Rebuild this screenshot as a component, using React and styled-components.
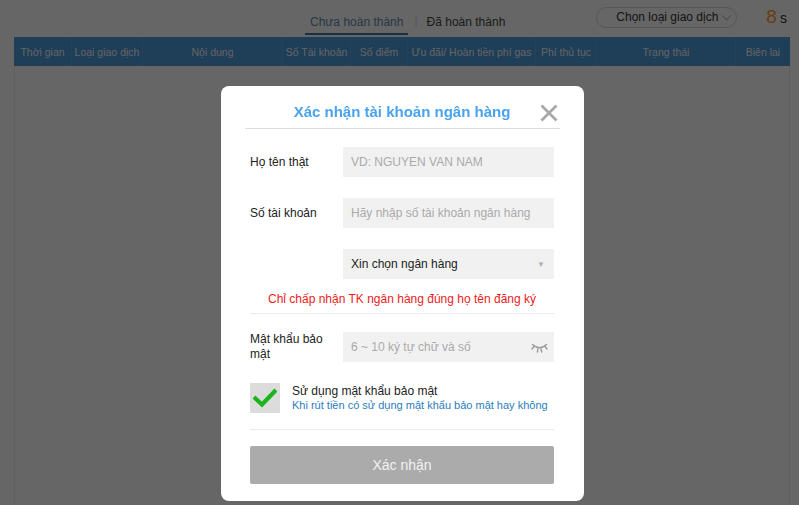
import React from "react";
import styled, { createGlobalStyle } from "styled-components";

const GlobalStyle = createGlobalStyle`
  html, body {
    margin: 0;
    padding: 0;
    background: #ffffff;
    font-family: "Liberation Sans", Arial, sans-serif;
  }
  * { box-sizing: border-box; }
`;

const columns = [
  { label: "Thời gian", width: 58 },
  { label: "Loại giao dịch", width: 71 },
  { label: "Nội dung", width: 140 },
  { label: "Số Tài khoản", width: 68 },
  { label: "Số điểm", width: 57 },
  { label: "Ưu đãi/ Hoàn tiền phí gas", width: 128 },
  { label: "Phí thủ tục", width: 61 },
  { label: "Trạng thái", width: 139 },
  { label: "Biên lai", width: 54 },
];

function EyeClosed() {
  return (
    <svg width="17" height="11" viewBox="0 0 17 11" fill="none" stroke="#9a9a9a" strokeWidth="1.4" strokeLinecap="round">
      <path d="M1.5 2.5 Q8.5 9 15.5 2.5" />
      <path d="M3 4.5 L1 7" />
      <path d="M14 4.5 L16 7" />
      <path d="M7 7 L6.3 10" />
      <path d="M10 7 L10.7 10" />
    </svg>
  );
}

function CheckMark() {
  return (
    <svg width="24" height="20" viewBox="0 0 24 20" fill="none">
      <path d="M2.5 10.5 L9 16.5 L21.5 3.5" stroke="#1db51d" strokeWidth="4.2" strokeLinecap="square" />
    </svg>
  );
}

function CloseIcon() {
  return (
    <svg width="18" height="18" viewBox="0 0 18 18" stroke="#a8a8a8" strokeWidth="2.8">
      <path d="M1.5 1.5 L16.5 16.5 M16.5 1.5 L1.5 16.5" />
    </svg>
  );
}

function App() {
  return (
    <>
      <GlobalStyle />
      <Page>
        <TopBar>
          <Tabs>
            <Tab $active>Chưa hoàn thành</Tab>
            <TabDivider>|</TabDivider>
            <Tab>Đã hoàn thành</Tab>
          </Tabs>
          <FilterSelect>
            Chọn loại giao dịch
            <Chevron viewBox="0 0 10 6" fill="none" stroke="#c4c4c4" strokeWidth="1">
              <path d="M1 1 L5 5 L9 1" />
            </Chevron>
          </FilterSelect>
          <Timer>
            <TimerNumber>8</TimerNumber>
            <TimerUnit>s</TimerUnit>
          </Timer>
        </TopBar>
        <Table>
          <HeaderRow>
            {columns.map((c) => (
              <HeaderCell key={c.label} $w={c.width}>
                {c.label}
              </HeaderCell>
            ))}
          </HeaderRow>
          <TableBody />
        </Table>
      </Page>

      <Overlay>
        <Modal>
          <ModalHeader>
            <ModalTitle>Xác nhận tài khoản ngân hàng</ModalTitle>
            <CloseButton>
              <CloseIcon />
            </CloseButton>
          </ModalHeader>
          <Form>
            <FieldRow>
              <Label>Họ tên thật</Label>
              <Input placeholder="VD: NGUYEN VAN NAM" />
            </FieldRow>
            <FieldRow>
              <Label>Số tài khoản</Label>
              <Input placeholder="Hãy nhập số tài khoản ngân hàng" />
            </FieldRow>
            <FieldRow>
              <Label />
              <SelectBox>
                Xin chọn ngân hàng
                <SelectArrow>▼</SelectArrow>
              </SelectBox>
            </FieldRow>
            <Warning>Chỉ chấp nhận TK ngân hàng đúng họ tên đăng ký</Warning>
            <Divider $before={0} $after={-3} />
            <FieldRow>
              <Label>Mật khẩu bảo mật</Label>
              <InputWrap>
                <Input placeholder="6 ~ 10 ký tự chữ và số" />
                <EyeButton>
                  <EyeClosed />
                </EyeButton>
              </InputWrap>
            </FieldRow>
            <CheckRow>
              <CheckBox>
                <CheckMark />
              </CheckBox>
              <CheckText>
                <CheckTitle>Sử dụng mật khẩu bảo mật</CheckTitle>
                <CheckHint>Khi rút tiền có sử dụng mật khẩu bảo mật hay không</CheckHint>
              </CheckText>
            </CheckRow>
            <Divider $before={-5} $after={-5} />
            <SubmitButton>Xác nhận</SubmitButton>
          </Form>
        </Modal>
      </Overlay>
    </>
  );
}

export default App;

const Page = styled.div`
  height: 505px;
  padding: 0 9px 0 14px;
  display: flex;
  flex-direction: column;
  white-space: nowrap;
`;

const TopBar = styled.div`
  height: 37px;
  display: flex;
  align-items: center;
  & > * {
    flex-shrink: 0;
  }
`;

const Tabs = styled.div`
  display: flex;
  align-items: center;
  margin-left: 291px;
  height: 100%;
`;

const Tab = styled.div`
  font-size: 12px;
  padding: 3px 5px 0;
  height: 30px;
  line-height: 28px;
  color: ${(p) => (p.$active ? "#5f8cb4" : "#444")};
  border-bottom: 2px solid ${(p) => (p.$active ? "#3f73a0" : "transparent")};
  margin-top: 3px;
`;

const TabDivider = styled.span`
  color: #d8d8d8;
  font-size: 12px;
  margin: 3px 4px 0 6px;
`;

const FilterSelect = styled.div`
  margin-left: 86px;
  margin-top: -3px;
  width: 141px;
  height: 21px;
  border: 1px solid #d6d6d6;
  border-radius: 11px;
  display: flex;
  align-items: center;
  padding-left: 19px;
  font-size: 12px;
  color: #333;
  gap: 3px;
`;

const Chevron = styled.svg`
  width: 11px;
  height: 7px;
`;

const Timer = styled.div`
  margin-left: 29px;
  margin-top: -4px;
  display: flex;
  align-items: baseline;
  gap: 3px;
`;

const TimerNumber = styled.span`
  font-size: 19px;
  color: #ff9a1e;
`;

const TimerUnit = styled.span`
  font-size: 14px;
  color: #333;
`;

const Table = styled.div`
  flex: 1;
  display: flex;
  flex-direction: column;
  width: 776px;
`;

const HeaderRow = styled.div`
  display: flex;
  height: 29px;
  background: #4e9bdc;
`;

const HeaderCell = styled.div`
  width: ${(p) => p.$w}px;
  flex-shrink: 0;
  display: flex;
  align-items: center;
  justify-content: center;
  font-size: 10.5px;
  color: #f4f8fc;
  overflow: hidden;
  border-right: 1px solid #5fa6e0;
  &:last-child {
    border-right: none;
  }
`;

const TableBody = styled.div`
  flex: 1;
  background: #fff;
  border-left: 1px solid #f0f0f0;
  border-right: 1px solid #e8e8e8;
`;

const Overlay = styled.div`
  position: fixed;
  inset: 0;
  background: rgba(0, 0, 0, 0.6);
  display: flex;
  justify-content: center;
  align-items: flex-start;
  padding: 86px 0 0 6px;
`;

const Modal = styled.div`
  width: 363px;
  background: #fff;
  border-radius: 8px;
  padding: 0 30px 17px 29px;
`;

const ModalHeader = styled.div`
  position: relative;
  height: 43px;
  margin: 0 -6px 0 -5px;
  border-bottom: 1px solid #dcdcdc;
  display: flex;
  align-items: center;
  justify-content: center;
`;

const ModalTitle = styled.div`
  font-size: 15px;
  font-weight: bold;
  color: #4aa3ec;
  margin-top: 8px;
  margin-left: -1px;
`;

const CloseButton = styled.div`
  position: absolute;
  right: 2px;
  top: 18px;
  width: 18px;
  height: 18px;
  display: flex;
`;

const Form = styled.div`
  display: flex;
  flex-direction: column;
  gap: 21px;
  padding-top: 18px;
`;

const FieldRow = styled.div`
  display: flex;
  align-items: center;
`;

const Label = styled.div`
  width: 93px;
  flex-shrink: 0;
  font-size: 12px;
  color: #222;
  line-height: 15px;
  padding-right: 14px;
`;

const InputWrap = styled.div`
  position: relative;
  flex: 1;
  display: flex;
`;

const Input = styled.input`
  flex: 1;
  width: 100%;
  height: 30px;
  border: none;
  outline: none;
  background: #f1f1f1;
  padding: 0 8px;
  font-size: 12px;
  font-family: "Liberation Sans", Arial, sans-serif;
  color: #333;
  &::placeholder {
    color: #aaaaaa;
  }
`;

const EyeButton = styled.div`
  position: absolute;
  right: 6px;
  top: 10px;
  display: flex;
`;

const SelectBox = styled.div`
  flex: 1;
  height: 30px;
  background: #f1f1f1;
  display: flex;
  align-items: center;
  justify-content: space-between;
  padding: 0 9px 0 8px;
  font-size: 12px;
  color: #222;
`;

const SelectArrow = styled.span`
  font-size: 8px;
  color: #b0b0b0;
`;

const Warning = styled.div`
  text-align: center;
  font-size: 12px;
  color: #ec1c1c;
  margin-top: -8px;
  margin-bottom: -14px;
`;

const Divider = styled.div`
  height: 1px;
  background: #ececec;
  margin-top: ${(p) => p.$before}px;
  margin-bottom: ${(p) => p.$after}px;
`;

const CheckRow = styled.div`
  display: flex;
  align-items: center;
  gap: 12px;
`;

const CheckBox = styled.div`
  width: 30px;
  height: 30px;
  background: #dcdcdc;
  display: flex;
  align-items: center;
  justify-content: center;
`;

const CheckText = styled.div`
  display: flex;
  flex-direction: column;
  gap: 1px;
  margin-top: -1px;
`;

const CheckTitle = styled.div`
  font-size: 12px;
  color: #222;
`;

const CheckHint = styled.div`
  font-size: 11px;
  color: #2b7dbd;
`;

const SubmitButton = styled.div`
  height: 38px;
  background: #ababab;
  border-radius: 2px;
  display: flex;
  align-items: center;
  justify-content: center;
  font-size: 14px;
  color: #f2f2f2;
`;
